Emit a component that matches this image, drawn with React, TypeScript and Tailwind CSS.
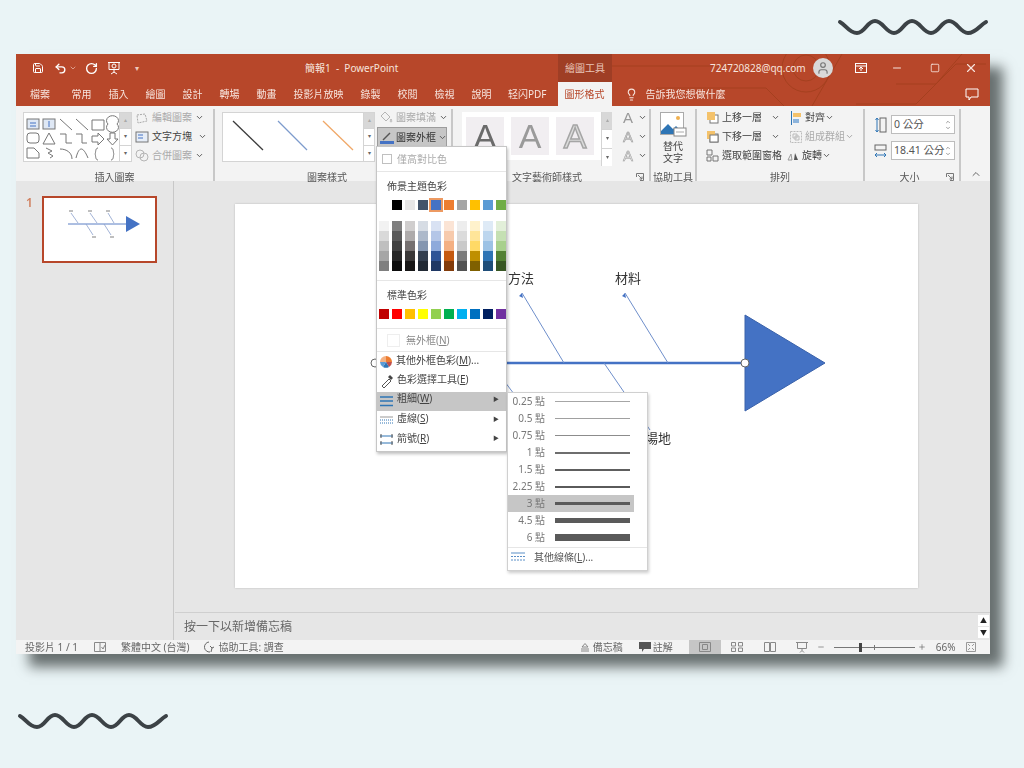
import { ChevronDown, ChevronUp, Lightbulb, Minus, Plus, Save, Square, Undo2, RotateCw, X, User } from 'lucide-react';

const themeColors = ['#ffffff', '#000000', '#e7e6e6', '#44546a', '#4472c4', '#ed7d31', '#a5a5a5', '#ffc000', '#5b9bd5', '#70ad47'];

const shades = [
  ['#f2f2f2', '#d9d9d9', '#bfbfbf', '#a6a6a6', '#7f7f7f'],
  ['#7f7f7f', '#595959', '#404040', '#262626', '#0d0d0d'],
  ['#d0cece', '#aeabab', '#757070', '#3a3838', '#171616'],
  ['#d6dce4', '#adb9ca', '#8496b0', '#333f4f', '#222a35'],
  ['#d9e2f3', '#b4c6e7', '#8eaadb', '#2f5496', '#1f3864'],
  ['#fbe4d5', '#f7caac', '#f4b083', '#c55a11', '#833c0b'],
  ['#ededed', '#dbdbdb', '#c9c9c9', '#7b7b7b', '#525252'],
  ['#fff2cc', '#ffe599', '#ffd966', '#bf8f00', '#7f6000'],
  ['#deeaf6', '#bdd6ee', '#9cc2e5', '#2e74b5', '#1f4e79'],
  ['#e2efd9', '#c5e0b3', '#a8d08d', '#538135', '#375623'],
];

const standardColors = ['#c00000', '#ff0000', '#ffc000', '#ffff00', '#92d050', '#00b050', '#00b0f0', '#0070c0', '#002060', '#7030a0'];

const weights = [
  { label: '0.25 點', h: 1, color: '#a6a6a6' },
  { label: '0.5 點', h: 1, color: '#a0a0a0' },
  { label: '0.75 點', h: 1, color: '#8c8c8c' },
  { label: '1 點', h: 2, color: '#6e6e6e' },
  { label: '1.5 點', h: 2, color: '#5e5e5e' },
  { label: '2.25 點', h: 2, color: '#5a5a5a' },
  { label: '3 點', h: 3, color: '#5a5a5a', active: true },
  { label: '4.5 點', h: 5, color: '#5a5a5a' },
  { label: '6 點', h: 7, color: '#5a5a5a' },
];

const tabs = ['常用', '插入', '繪圖', '設計', '轉場', '動畫', '投影片放映', '錄製', '校閱', '檢視', '說明'];

function Wave() {
  return (
    <svg width="156" height="20" viewBox="0 0 156 20" fill="none" className="block">
      <path
        d="M4 5C10 8 13 16 21 16C29 16 31 4 39 4C47 4 50 16 58 16C66 16 68 4 76 4C84 4 87 16 95 16C103 16 105 4 113 4C121 4 124 16 132 16C140 16 144 8 150 5"
        stroke="#3c4246"
        strokeWidth="4"
        strokeLinecap="round"
      />
    </svg>
  );
}

function GroupLabel({ children }: { children: string }) {
  return <div className="h-[12px] leading-[16px] text-center text-[10px] text-[#555]">{children}</div>;
}

function Scroller({ width = 'w-[12px]' }: { width?: string }) {
  return (
    <div className={`${width} flex flex-col border-l border-[#d4d4d4] text-[#666]`}>
      <div className="flex-1 bg-[#d8d8d8] flex items-center justify-center text-[6px] text-[#aaa]">▴</div>
      <div className="flex-1 bg-white border-y border-[#d4d4d4] flex items-center justify-center text-[6px]">▾</div>
      <div className="flex-1 bg-white flex items-center justify-center text-[6px]">▾</div>
    </div>
  );
}

function ShapeGallery() {
  return (
    <svg width="95" height="48" viewBox="0 0 95 48" fill="none" stroke="#777" strokeWidth="1" className="bg-white">
      <rect x="3" y="6" width="12" height="10" fill="#dfe8f5" />
      <path d="M6 10h6M6 13h6" stroke="#4472c4" />
      <rect x="19" y="6" width="12" height="10" fill="#dfe8f5" />
      <path d="M25 8v6" stroke="#4472c4" />
      <path d="M36 6l12 11M52 6l12 11M68 7h12v10h-12zM84 11a6 5 0 1 0 9 0a6 5 0 1 0 -9 0" />
      <rect x="3" y="20" width="12" height="10" rx="3" />
      <path d="M19 31l6-11 6 11zM36 21h6v9h6M52 21h6v9h5" />
      <path d="M68 23h6v-3l6 6-6 6v-3h-6zM86 20h5v6h3l-5.500 6-5.500-6h3z" />
      <path d="M3 35h7l5 5v5H3zM22 35l6 3-4 2 5 3-3 2M36 36c7 0 12 4 12 10M52 45c3-12 7-12 12 0M74 35c-3 0-2 5-3 6 1 1 0 6 3 6M87 35c3 0 2 5 3 6-1 1 0 6-3 6" />
    </svg>
  );
}

function StyleGallery() {
  return (
    <svg width="140" height="48" viewBox="0 0 140 48" fill="none" strokeWidth="1.300" className="bg-white">
      <path d="M10 8l30 29" stroke="#3c3c3c" />
      <path d="M55 8l29 29" stroke="#7d9bcc" />
      <path d="M100 8l30 29" stroke="#f0a868" />
    </svg>
  );
}

function GrayMenuIcon({ kind }: { kind: 'edit' | 'text' | 'merge' | 'fill' }) {
  if (kind === 'text') {
    return (
      <svg width="14" height="12" viewBox="0 0 14 12" fill="none" stroke="#777">
        <rect x="1" y="1" width="12" height="10" fill="#e6edf7" />
        <path d="M3 4h5M3 7h5" stroke="#4472c4" />
      </svg>
    );
  }
  if (kind === 'edit') {
    return (
      <svg width="14" height="12" viewBox="0 0 14 12" fill="none" stroke="#aaa">
        <path d="M2 3l8-1 2 7-9 2z" strokeDasharray="2 1" />
      </svg>
    );
  }
  if (kind === 'fill') {
    return (
      <svg width="14" height="13" viewBox="0 0 14 13" fill="none" stroke="#b5b5b5">
        <path d="M6 1l5 5-4 4-5-5zM12 8c1 2 1 3 0 3s-1-1 0-3z" />
      </svg>
    );
  }
  return (
    <svg width="14" height="13" viewBox="0 0 14 13" fill="none" stroke="#b5b5b5">
      <circle cx="5" cy="5" r="4" />
      <circle cx="9" cy="8" r="4" />
    </svg>
  );
}

function BigA({ variant, className = '' }: { variant: 'solid' | 'pale' | 'outline'; className?: string }) {
  const color = variant === 'solid' ? 'text-[#6b6b6b]' : variant === 'pale' ? 'text-[#9a9a9a]' : 'text-[#dcdcdc] [-webkit-text-stroke:1.500px_#a5a5a5]';
  return (
    <div className={`w-[38px] h-[38px] bg-[#f1eef1] flex items-center justify-center text-[34px] font-['Liberation_Sans',sans-serif] leading-none ${color} ${className}`}>
      A
    </div>
  );
}

function LayerIcon({ front }: { front: boolean }) {
  return (
    <svg width="13" height="13" viewBox="0 0 13 13" fill="none">
      <rect x="4" y="4" width="8" height="8" fill="#fff" stroke="#777" />
      <rect x="1" y="1" width="8" height="8" fill="#f4c26b" />
      {!front && <rect x="4" y="5" width="8" height="7" fill="#fff" stroke="#777" />}
    </svg>
  );
}

function AltTextIcon() {
  return (
    <svg width="27" height="26" viewBox="0 0 27 26" fill="none">
      <rect x="0.500" y="0.500" width="23" height="22" fill="#fff" stroke="#aaa" />
      <circle cx="18" cy="6" r="2" fill="#f0b050" />
      <path d="M1 19l7-7 5 5 3-3 7 7v1H1z" fill="#2e75b5" />
      <rect x="14" y="16" width="12" height="8" fill="#fff" stroke="#888" />
      <path d="M16 20h8" stroke="#aaa" />
    </svg>
  );
}

function SpinBox({ value }: { value: string }) {
  return (
    <div className="w-[64px] h-[19px] bg-white border border-[#bdbdbd] flex items-center pl-[2px] pr-[3px] text-[10.500px] text-[#555]">
      <span className="flex-1 whitespace-nowrap">{value}</span>
      <div className="flex flex-col text-[#666]">
        <ChevronUp size={6} strokeWidth={2.500} />
        <ChevronDown size={6} strokeWidth={2.500} />
      </div>
    </div>
  );
}

function Launcher() {
  return (
    <svg width="8" height="8" viewBox="0 0 8 8" fill="none" stroke="#777">
      <path d="M0.500 4V0.500H7.500V7.500H4M2 2l4 4M6 3.500V6H3.500" />
    </svg>
  );
}

function Caret() {
  return <ChevronDown size={9} strokeWidth={2.500} className="text-[#555] shrink-0" />;
}

function Ribbon() {
  return (
    <div className="h-[75px] bg-[#f3f3f3] flex pt-[3px] shrink-0">
      {/* 插入圖案 */}
      <div className="w-[199px] h-[72px] border-r-2 border-[#c8c8c8] flex flex-col">
        <div className="flex h-[57px] pl-[7px] pt-[3px]">
          <div className="flex h-[48px] border border-[#d4d4d4] box-content">
            <ShapeGallery />
            <Scroller />
          </div>
          <div className="ml-[3px] text-[10px] -mt-[4px]">
            <div className="h-[19px] flex items-center gap-[3px] text-[#aaa]">
              <GrayMenuIcon kind="edit" />
              編輯圖案
              <Caret />
            </div>
            <div className="h-[19px] flex items-center gap-[3px] text-[#444]">
              <GrayMenuIcon kind="text" />
              文字方塊
              <span className="ml-[3px]"><Caret /></span>
            </div>
            <div className="h-[19px] flex items-center gap-[3px] text-[#aaa]">
              <GrayMenuIcon kind="merge" />
              合併圖案
              <Caret />
            </div>
          </div>
        </div>
        <div className="mt-auto"><GroupLabel>插入圖案</GroupLabel></div>
      </div>

      {/* 圖案樣式 */}
      <div className="w-[238px] h-[72px] border-r-2 border-[#c8c8c8] flex flex-col">
        <div className="flex h-[57px] pl-[7px] pt-[3px]">
          <div className="flex h-[48px] border border-[#d4d4d4] box-content">
            <StyleGallery />
            <Scroller width="w-[11px]" />
          </div>
          <div className="ml-[2px] -mt-[4px] text-[10px]">
            <div className="h-[19px] flex items-center gap-[3px] pl-[2px] text-[#aaa] whitespace-nowrap">
              <GrayMenuIcon kind="fill" />
              圖案填滿
              <Caret />
            </div>
            <div className="h-[20px] w-[70px] bg-[#c6c6c6] border border-[#9c9c9c] flex items-center gap-[2px] pl-[2px] text-[#333] whitespace-nowrap">
              <svg width="14" height="13" viewBox="0 0 14 13" fill="none" className="shrink-0">
                <path d="M3 9l7-7" stroke="#555" strokeWidth="1.500" />
                <rect x="0" y="10" width="14" height="3" fill="#4472c4" />
              </svg>
              圖案外框
              <Caret />
            </div>
          </div>
        </div>
        <div className="mt-auto pr-[12px]"><GroupLabel>圖案樣式</GroupLabel></div>
      </div>

      {/* 文字藝術師樣式 */}
      <div className="w-[198px] h-[72px] border-r-2 border-[#c8c8c8] flex flex-col">
        <div className="flex h-[57px] pl-[9px] pt-[3px]">
          <div className="flex h-[48px] w-[139px] bg-white items-center gap-[7px] pl-[4px]">
            <BigA variant="solid" />
            <BigA variant="pale" />
            <BigA variant="outline" />
          </div>
          <Scroller width="w-[11px]" />
          <div className="ml-[11px] -mt-[4px] text-[15px] text-[#999] font-['Liberation_Sans',sans-serif] leading-[19px]">
            <div className="flex items-center gap-[5px]">A<Caret /></div>
            <div className="flex items-center gap-[5px] text-[#ccc] [-webkit-text-stroke:0.500px_#999]">A<Caret /></div>
            <div className="flex items-center gap-[5px] text-[#ddd] [-webkit-text-stroke:0.500px_#999]">A<Caret /></div>
          </div>
        </div>
        <div className="mt-auto flex items-end pl-[59px] pr-[5px] justify-between">
          <GroupLabel>文字藝術師樣式</GroupLabel>
          <Launcher />
        </div>
      </div>

      {/* 協助工具 */}
      <div className="w-[46px] h-[72px] border-r-2 border-[#c8c8c8] flex flex-col items-center">
        <div className="h-[57px] pt-[3px] flex flex-col items-center text-[10px] leading-[12px] text-[#444]">
          <AltTextIcon />
          <div className="mt-[2px]">替代</div>
          <div>文字</div>
        </div>
        <div className="mt-auto"><GroupLabel>協助工具</GroupLabel></div>
      </div>

      {/* 排列 */}
      <div className="w-[168px] h-[72px] border-r-2 border-[#c8c8c8] flex flex-col">
        <div className="h-[57px] pl-[9px] text-[10px] text-[#444]">
          <div className="h-[19px] mt-[-1px] flex items-center">
            <LayerIcon front />
            <span className="ml-[3px] w-[49px]">上移一層</span>
            <Caret />
            <svg width="12" height="14" viewBox="0 0 12 14" fill="none" className="ml-[10px] mr-[3px]">
              <path d="M1.500 0v14" stroke="#2e75b5" />
              <rect x="3" y="2" width="8" height="4" fill="#f4c26b" />
              <rect x="3" y="8" width="6" height="4" fill="#8db4dc" />
            </svg>
            對齊
            <Caret />
          </div>
          <div className="h-[19px] flex items-center">
            <LayerIcon front={false} />
            <span className="ml-[3px] w-[49px]">下移一層</span>
            <Caret />
            <svg width="12" height="12" viewBox="0 0 12 12" fill="none" stroke="#bbb" className="ml-[10px] mr-[3px]">
              <path d="M0.500 0.500h11v11h-11z" strokeDasharray="2 1" />
              <path d="M3 3h4v4H3zM5 5h4v4H5z" />
            </svg>
            <span className="text-[#aaa]">組成群組</span>
            <span className="opacity-50"><Caret /></span>
          </div>
          <div className="h-[19px] flex items-center">
            <svg width="13" height="13" viewBox="0 0 13 13" fill="none" stroke="#777">
              <path d="M1 1h5v5H1zM7 7h5v5H7zM1 8h4v4H1z" />
            </svg>
            <span className="ml-[3px] w-[65px] whitespace-nowrap">選取範圍窗格</span>
            <svg width="12" height="10" viewBox="0 0 12 10" className="mr-[3px]">
              <path d="M1 9l3-6 1 6z" fill="none" stroke="#999" />
              <path d="M7 9l1-7 3 7z" fill="#555" />
            </svg>
            旋轉
            <Caret />
          </div>
        </div>
        <div className="mt-auto"><GroupLabel>排列</GroupLabel></div>
      </div>

      {/* 大小 */}
      <div className="w-[96px] h-[72px] border-r-2 border-[#c8c8c8] flex flex-col">
        <div className="h-[57px] pl-[9px] pt-[6px] flex flex-col gap-[7px]">
          <div className="flex items-center gap-[4px]">
            <svg width="13" height="16" viewBox="0 0 13 16" fill="none" stroke="#666">
              <rect x="6" y="1" width="6" height="14" />
              <path d="M3 1v14" stroke="#2e75b5" />
              <path d="M1.500 3L3 1l1.500 2M1.500 13L3 15l1.500-2" stroke="#2e75b5" />
            </svg>
            <SpinBox value="0 公分" />
          </div>
          <div className="flex items-center gap-[4px]">
            <svg width="13" height="16" viewBox="0 0 13 16" fill="none" stroke="#666">
              <rect x="1" y="2" width="11" height="5" />
              <path d="M1 12h11" stroke="#2e75b5" />
              <path d="M3 10l-2 2 2 2M10 10l2 2-2 2" stroke="#2e75b5" />
            </svg>
            <SpinBox value="18.41 公分" />
          </div>
        </div>
        <div className="mt-auto flex items-end pr-[5px]">
          <div className="flex-1 pl-[8px]"><GroupLabel>大小</GroupLabel></div>
          <Launcher />
        </div>
      </div>

      <div className="flex-1 flex items-end justify-center pb-[1px]">
        <ChevronUp size={12} className="text-[#666]" />
      </div>
    </div>
  );
}

function ColorMenu() {
  return (
    <div className="absolute left-[360px] top-[92px] w-[131px] h-[306px] box-border bg-white border border-[#c6c6c6] shadow-[1px_2px_3px_rgba(0,0,0,0.25)] text-[10px] text-[#444]">
      <div className="h-[25px] border-b border-[#e6e6e6] flex items-center pl-[5px] text-[#aaa]">
        <span className="w-[10px] h-[10px] border border-[#c0c0c0] mr-[5px]" />
        僅高對比色
      </div>
      <div className="h-[28px] flex items-center pl-[10px] text-[#444]">佈景主題色彩</div>
      <div className="flex gap-[3px] pl-[2px]">
        {themeColors.map((c, i) => (
          <span
            key={c}
            className={`w-[10px] h-[10px] block ${i === 4 ? 'outline-2 outline-[#ed9a62]' : ''}`}
            style={{ backgroundColor: c }}
          />
        ))}
      </div>
      <div className="flex gap-[3px] pl-[2px] mt-[11px]">
        {shades.map((col, i) => (
          <div key={i} className="w-[10px] flex flex-col">
            {col.map((c, j) => (
              <span key={j} className="h-[10px] block" style={{ backgroundColor: c }} />
            ))}
          </div>
        ))}
      </div>
      <div className="h-[25px] mt-[9px] pt-[4px] border-t border-[#e6e6e6] flex items-center pl-[10px]">標準色彩</div>
      <div className="flex gap-[3px] pl-[2px] mt-[4px]">
        {standardColors.map((c) => (
          <span key={c} className="w-[10px] h-[10px] block" style={{ backgroundColor: c }} />
        ))}
      </div>
      <div className="h-[24px] mt-[9px] border-y border-[#e6e6e6] flex items-center pl-[10px] text-[#888]">
        <span className="w-[13px] h-[13px] border border-[#eee] mr-[6px]" />
        <span>無外框(<u>N</u>)</span>
      </div>
      <div className="h-[19px] flex items-center pl-[2px] gap-[3px] pb-[2px]">
        <svg width="14" height="14" viewBox="0 0 14 14" className="mt-[2px]">
          <path d="M7 7V1a6 6 0 0 1 6 6z" fill="#ed7d31" />
          <path d="M7 7h6a6 6 0 0 1-3 5z" fill="#c0504d" />
          <path d="M7 7l3 5a6 6 0 0 1-6 0z" fill="#2e75b5" />
          <path d="M7 7l-3 5a6 6 0 0 1-3-5z" fill="#5b9bd5" />
          <path d="M7 7H1a6 6 0 0 1 6-6z" fill="#f4b183" />
        </svg>
        <span className="whitespace-nowrap">其他外框色彩(<u>M</u>)...</span>
      </div>
      <div className="h-[21px] flex items-center pl-[3px] gap-[4px] pb-[4px]">
        <svg width="13" height="14" viewBox="0 0 13 14" fill="none" className="mt-[3px]">
          <path d="M2 12l7-7 2 2-7 7z" fill="#fff" stroke="#555" />
          <path d="M8 3l2-2 3 3-2 2z" fill="#444" />
        </svg>
        <span className="whitespace-nowrap">色彩選擇工具(<u>E</u>)</span>
      </div>
      <div className="h-[19px] bg-[#c6c6c6] flex items-center pl-[3px] pr-[7px] gap-[4px] pb-[6px]">
        <svg width="13" height="12" viewBox="0 0 13 12" className="mt-[6px]">
          <path d="M0 1h13M0 5h13M0 9.500h13" stroke="#2e75b5" strokeWidth="1.500" />
        </svg>
        <span className="flex-1">粗細(<u>W</u>)</span>
        <span className="text-[6px] mt-[2px]">▶</span>
      </div>
      <div className="h-[19px] flex items-center pl-[3px] pr-[7px] gap-[4px] pb-[5px]">
        <svg width="13" height="10" viewBox="0 0 13 10" className="mt-[4px]">
          <path d="M0 2h13" stroke="#999" />
          <path d="M0 5h13M0 8h13" stroke="#2e75b5" strokeDasharray="1 1" />
        </svg>
        <span className="flex-1">虛線(<u>S</u>)</span>
        <span className="text-[6px] mt-[3px]">▶</span>
      </div>
      <div className="h-[19px] flex items-center pl-[3px] pr-[7px] gap-[4px] pb-[2px]">
        <svg width="13" height="12" viewBox="0 0 13 12" className="mt-[2px]">
          <path d="M0 2h13M0 9h13" stroke="#2e75b5" />
          <path d="M1 0v4M12 0v4M1 7v4M12 7v4" stroke="#555" />
        </svg>
        <span className="flex-1">箭號(<u>R</u>)</span>
        <span className="text-[6px]">▶</span>
      </div>
    </div>
  );
}

function WeightMenu() {
  return (
    <div className="absolute left-[491px] top-[338px] w-[141px] h-[179px] box-border bg-white border border-[#d0d0d0] shadow-[1px_2px_3px_rgba(0,0,0,0.2)] text-[10px] text-[#777]">
      <div>
        {weights.map((w) => (
          <div key={w.label} className={`h-[17px] w-[126px] flex items-center ${w.active ? 'bg-[#c6c6c6]' : ''}`}>
            <span className="w-[37px] text-right whitespace-nowrap">{w.label}</span>
            <span className="ml-[10px] w-[75px] block" style={{ height: w.h, backgroundColor: w.color }} />
          </div>
        ))}
      </div>
      <div className="mt-[1px] border-t border-[#e6e6e6] h-[19px] flex items-center pl-[3px] text-[#555]">
        <svg width="14" height="10" viewBox="0 0 14 10" className="mr-[9px]">
          <path d="M0 1h14" stroke="#5b8fc7" />
          <path d="M0 4.500h14M0 8h14" stroke="#5b8fc7" strokeDasharray="2 1" />
        </svg>
        <span className="whitespace-nowrap">其他線條(<u>L</u>)...</span>
      </div>
      <div className="text-center text-[7px] leading-[6px] tracking-[1px] text-[#ccc]">....</div>
    </div>
  );
}

function Slide() {
  return (
    <div className="relative w-[683px] h-[384px] bg-white ml-[61px] mt-[23px] shadow-[0_0_2px_rgba(0,0,0,0.2)] text-[13px] text-[#333]">
      <svg width="683" height="384" viewBox="0 0 683 384" fill="none">
        <path d="M140 159H510" stroke="#4472c4" strokeWidth="2.500" />
        <path d="M287 89l42 70M390 89l43 70M369 159l46 67M270 178l12 16" stroke="#6f8fcb" strokeWidth="1" />
        <path d="M287 89l1 5-4-2zM390 89l1 5-4-2z" fill="#4472c4" />
        <path d="M510 111L590 159L510 207Z" fill="#4472c4" stroke="#3a62aa" />
        <circle cx="510" cy="159" r="4" fill="#fff" stroke="#666" />
        <circle cx="140" cy="159" r="4" fill="#fff" stroke="#666" />
      </svg>
      {/* fishbone labels */}
      <span className="absolute left-[273px] top-[65px]">方法</span>
      <span className="absolute left-[380px] top-[65px]">材料</span>
      <span className="absolute left-[410px] top-[225px]">場地</span>
    </div>
  );
}

function Thumbnail() {
  return (
    <div className="w-[115px] h-[67px] border-2 border-[#b7472a] bg-white shrink-0">
      <svg width="111" height="63" viewBox="0 0 111 63" fill="none">
        <path d="M24 26H82" stroke="#5b7fc4" strokeWidth="1" />
        <path d="M27 15l7 10M46 15l7 10M64 15l6 10M42 26l7 11M60 26l7 11" stroke="#8aa0cc" strokeWidth="0.800" />
        <path d="M82 18L96 26L82 34Z" fill="#4472c4" />
        <path d="M25 13h4M44 13h4M62 13h4M48 39h4M66 39h4" stroke="#aaa" strokeWidth="1.500" />
      </svg>
    </div>
  );
}

export default function App() {
  return (
    <div className="w-[1024px] h-[768px] overflow-hidden bg-[#eaf4f6] font-['Noto_Sans','Noto_Sans_CJK_TC',sans-serif] flex flex-col">
      <div className="h-[54px] flex justify-end pr-[32px] pt-[17px] shrink-0">
        <Wave />
      </div>

      {/* window */}
      <div className="relative w-[974px] h-[600px] ml-[16px] flex flex-col shrink-0 bg-[#e6e6e6] shadow-[13px_13px_12px_#687070] blur-[0.35px]">
        <div className="relative bg-[#b7472a] shrink-0">
          <svg width="974" height="52" viewBox="0 0 974 52" fill="none" stroke="#a5401f" className="absolute left-0 top-0">
            <path d="M596 12H744M640 34H750l18 18M840 50h60l40-40h30M880 30h40l26-30M826 0l-30 52" />
            <circle cx="790" cy="14" r="24" />
            <circle cx="790" cy="14" r="13" />
          </svg>
          <div className="relative h-[28px] flex text-white">
            <div className="w-[542px] flex items-center pl-[16px] text-[#fff]">
              <Save size={12} strokeWidth={2} />
              <Undo2 size={13} strokeWidth={2.500} className="ml-[10px]" />
              <ChevronDown size={8} className="ml-[2px] text-[#f0c8bc]" />
              <RotateCw size={13} strokeWidth={2.500} className="ml-[8px]" />
              <svg width="14" height="14" viewBox="0 0 14 14" fill="none" stroke="#fff" className="ml-[9px]">
                <path d="M1 1.500h12M2 1.500v7h10v-7M7 8.500v3M4 13l3-2 3 2" />
                <circle cx="7" cy="5" r="2" />
              </svg>
              <span className="ml-[14px] text-[8px] leading-none text-[#f0c8bc]">▾</span>
              <span className="ml-[166px] text-[10px] whitespace-nowrap text-[#f6e3dc]">簡報1&nbsp; -&nbsp; PowerPoint</span>
            </div>
            <div className="w-[54px] bg-[#9f3e25] flex items-center justify-center text-[10px] text-[#e9c4b8]">繪圖工具</div>
            <div className="flex-1 flex items-center text-[#f7e4dd]">
              <span className="ml-[98px] text-[10px] whitespace-nowrap">724720828@qq.com</span>
              <span className="ml-[7px] w-[20px] h-[20px] rounded-full bg-[#d9d9d9] flex items-center justify-center">
                <User size={14} className="text-[#777]" />
              </span>
              <svg width="12" height="10" viewBox="0 0 12 10" fill="none" stroke="#fff" className="ml-[22px]">
                <rect x="0.500" y="0.500" width="11" height="9" />
                <path d="M0 3h12M6 8V4M4 6l2-2 2 2" />
              </svg>
              <Minus size={12} className="ml-[24px]" />
              <Square size={10} className="ml-[27px]" />
              <X size={14} className="ml-[24px]" />
            </div>
          </div>

          <div className="relative h-[24px] flex items-center text-[10px] text-[#f7e4dd]">
            <span className="ml-[14px] mr-[13px]">檔案</span>
            {tabs.map((t) => (
              <span key={t} className="px-[8.500px] whitespace-nowrap">{t}</span>
            ))}
            <span className="px-[8px] whitespace-nowrap">轻闪PDF</span>
            <span className="ml-[3px] w-[54px] h-full bg-[#f3f3f3] text-[#b7472a] flex items-center justify-center whitespace-nowrap">圖形格式</span>
            <Lightbulb size={13} className="ml-[13px]" />
            <span className="ml-[8px] whitespace-nowrap">告訴我您想做什麼</span>
            <svg width="14" height="13" viewBox="0 0 14 13" fill="none" stroke="#fff" className="ml-auto mr-[11px]">
              <path d="M1 1h12v8H6l-2 3V9H1z" />
            </svg>
          </div>
        </div>

        <Ribbon />

        {/* main */}
        <div className="flex-1 flex min-h-0">
          <div className="w-[158px] border-r border-[#c8c8c8] flex pt-[15px] shrink-0">
            <span className="ml-[10px] w-[16px] text-[12px] leading-[14px] font-semibold text-[#d08060]">1</span>
            <Thumbnail />
          </div>
          <div className="flex-1 flex flex-col min-w-0">
            <div className="flex-1 min-h-0">
              <Slide />
            </div>
            <div className="h-[28px] border-t border-[#cfcfcf] flex items-center pl-[9px] text-[12px] text-[#666] shrink-0 ml-[1px]">
              按一下以新增備忘稿
              <div className="ml-auto mr-[1px] w-[11px] flex flex-col gap-px text-[#222]">
                <span className="h-[11px] bg-white flex items-center justify-center text-[7px] leading-none">▲</span>
                <span className="h-[11px] bg-white flex items-center justify-center text-[7px] leading-none">▼</span>
              </div>
            </div>
          </div>
        </div>

        {/* status bar */}
        <div className="h-[14px] bg-[#f3f3f3] flex items-center text-[10px] leading-none text-[#666] shrink-0">
          <span className="ml-[9px] whitespace-nowrap">投影片 1 / 1</span>
          <svg width="12" height="10" viewBox="0 0 12 10" fill="none" stroke="#888" className="ml-[16px]">
            <path d="M0.500 0.500h11v9h-11zM6 0.500v9M7.500 5l1.500 2 2-4" />
          </svg>
          <span className="ml-[15px] whitespace-nowrap">繁體中文 (台灣)</span>
          <svg width="12" height="12" viewBox="0 0 12 12" fill="none" stroke="#666" className="ml-[14px]">
            <path d="M5 1a5 5 0 1 0 1 10M6 5l2 2 2-1M8 7l-1 4" />
          </svg>
          <span className="ml-[3px] whitespace-nowrap">協助工具: 調查</span>

          <svg width="10" height="9" viewBox="0 0 10 9" fill="none" stroke="#888" className="ml-[296px]">
            <path d="M5 0.500L8 4H2zM1 6h8M1 8h8" />
          </svg>
          <span className="ml-[3px] whitespace-nowrap">備忘稿</span>
          <svg width="12" height="10" viewBox="0 0 12 10" className="ml-[16px]">
            <path d="M0 0h12v7H5l-2 3V7H0z" fill="#555" />
          </svg>
          <span className="ml-[2px] whitespace-nowrap">註解</span>
          <span className="ml-[16px] w-[32px] h-full bg-[#c6c6c6] flex items-center justify-center">
            <svg width="12" height="10" viewBox="0 0 12 10" fill="none" stroke="#888">
              <path d="M0.500 0.500h11v9h-11zM3.500 2.500h5v5h-5z" />
            </svg>
          </span>
          <svg width="12" height="10" viewBox="0 0 12 10" fill="none" stroke="#888" className="ml-[10px]">
            <path d="M0.500 0.500h4v3.500h-4zM7.500 0.500h4v3.500h-4zM0.500 6h4v3.500h-4zM7.500 6h4v3.500h-4z" />
          </svg>
          <svg width="12" height="10" viewBox="0 0 12 10" fill="none" stroke="#888" className="ml-[21px]">
            <path d="M0.500 0.500h5v9h-5zM6.500 0.500h5v9h-5z" />
          </svg>
          <svg width="12" height="11" viewBox="0 0 12 11" fill="none" stroke="#888" className="ml-[20px]">
            <path d="M0 0.500h12M1.500 0.500v6h9v-6M6 6.500v2M4 10.500l2-2 2 2" />
          </svg>
          <Minus size={8} className="ml-[9px]" />
          <div className="relative ml-[9px] w-[81px] h-px bg-[#777]">
            <span className="absolute left-[25px] -top-[4px] w-[3px] h-[9px] bg-[#444]" />
            <span className="absolute left-[40px] -top-[2px] w-px h-[5px] bg-[#777]" />
          </div>
          <Plus size={8} className="ml-[3px]" />
          <span className="ml-[10px]">66%</span>
          <svg width="10" height="10" viewBox="0 0 10 10" fill="none" stroke="#999" className="ml-[10px]">
            <path d="M0.500 0.500h9v9h-9zM2 2l2 2M8 2L6 4M2 8l2-2M8 8L6 6" />
          </svg>
        </div>

        <ColorMenu />
        <WeightMenu />
      </div>

      <div className="pl-[16px] pt-[57px]">
        <Wave />
      </div>
    </div>
  );
}
